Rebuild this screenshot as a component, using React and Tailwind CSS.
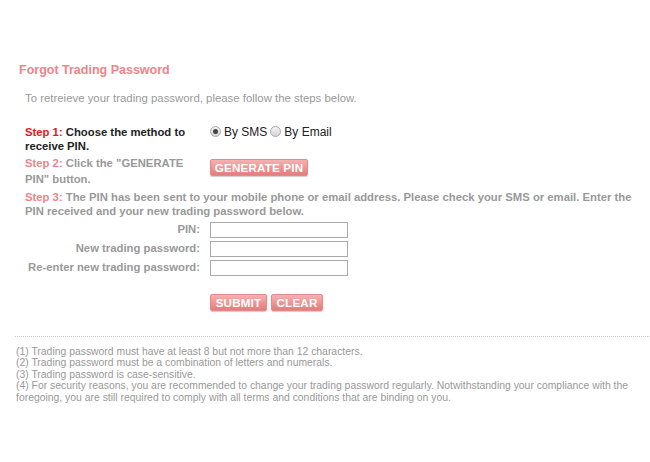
import React from 'react';

const Btn = ({ children, w }) => (
  <span className={`inline-flex items-center justify-center ${w} h-[17px] rounded-[2px] border border-[#e08a8a] bg-gradient-to-b from-[#f7b0b0] to-[#e47c7c] text-white font-bold text-[11.6px] tracking-[0.2px] shadow-[0_1px_1px_rgba(0,0,0,0.2)]`}>
    {children}
  </span>
);

const Radio = ({ checked }) => (
  <span className="inline-flex items-center justify-center w-[11px] h-[11px] rounded-full border border-[#aaa] bg-gradient-to-b from-[#f4f4f4] to-[#d4d4d4] mr-[3px] mt-[1px]">
    {checked && <span className="w-[5px] h-[5px] rounded-full bg-[#444]" />}
  </span>
);

const Field = ({ label }) => (
  <div className="flex items-center h-[19px]">
    <div className="w-[210px] text-right pr-[10px] text-[#999] font-bold text-[11.3px]">{label}</div>
    <div className="w-[138px] h-[16px] border border-[#aaa] bg-white" />
  </div>
);

export default function App() {
  return (
    <div className="w-[650px] h-[462px] bg-white font-['Liberation_Sans',Arial,sans-serif] text-[11.3px]">
      <div className="pt-[62px] pl-[19px]">
        <h1 className="text-[12.5px] font-bold text-[#f0838a] leading-[16px]">Forgot Trading Password</h1>
      </div>
      <div className="pl-[25px] pt-[13px] text-[11.4px] text-[#999] leading-[14px]">
        To retreieve your trading password, please follow the steps below.
      </div>

      <div className="pl-[25px] pt-[20px] pr-[12px] font-bold leading-[14px]">
        <div className="flex">
          <p className="w-[185px] text-[#222]">
            <b className="text-[#e8141e]">Step 1:</b> Choose the method to receive PIN.
          </p>
          <div className="flex items-start text-[#222] font-normal text-[12px]">
            <Radio checked />By SMS <span className="ml-[3px] flex"><Radio /></span>By Email
          </div>
        </div>

        <div className="flex mt-[2px] leading-[16px]">
          <p className="w-[185px] text-[#999]">
            <b className="text-[#f0838a]">Step 2:</b> Click the "GENERATE PIN" button.
          </p>
          <div className="pt-[4px]">
            <Btn w="w-[98px]">GENERATE PIN</Btn>
          </div>
        </div>

        <p className="mt-[3px] text-[#999]">
          <b className="text-[#f0838a]">Step 3:</b> The PIN has been sent to your mobile phone or email address. Please check your SMS or email. Enter the PIN received and your new trading password below.
        </p>
      </div>

      <div className="mt-[2px] flex flex-col">
        <Field label="PIN:" />
        <Field label="New trading password:" />
        <Field label="Re-enter new trading password:" />
      </div>

      <div className="pl-[210px] pt-[17px] flex gap-[4px]">
        <Btn w="w-[57px]">SUBMIT</Btn>
        <Btn w="w-[52px]">CLEAR</Btn>
      </div>

      <div className="mt-[25px] ml-[15px] border-t border-dotted border-[#ccc]" />

      <div className="pl-[16px] pt-[9px] pr-[10px] text-[10.4px] leading-[11.4px] text-[#999]">
        <div>(1) Trading password must have at least 8 but not more than 12 characters.</div>
        <div>(2) Trading password must be a combination of letters and numerals.</div>
        <div>(3) Trading password is case-sensitive.</div>
        <div>(4) For security reasons, you are recommended to change your trading password regularly. Notwithstanding your compliance with the foregoing, you are still required to comply with all terms and conditions that are binding on you.</div>
      </div>
    </div>
  );
}
